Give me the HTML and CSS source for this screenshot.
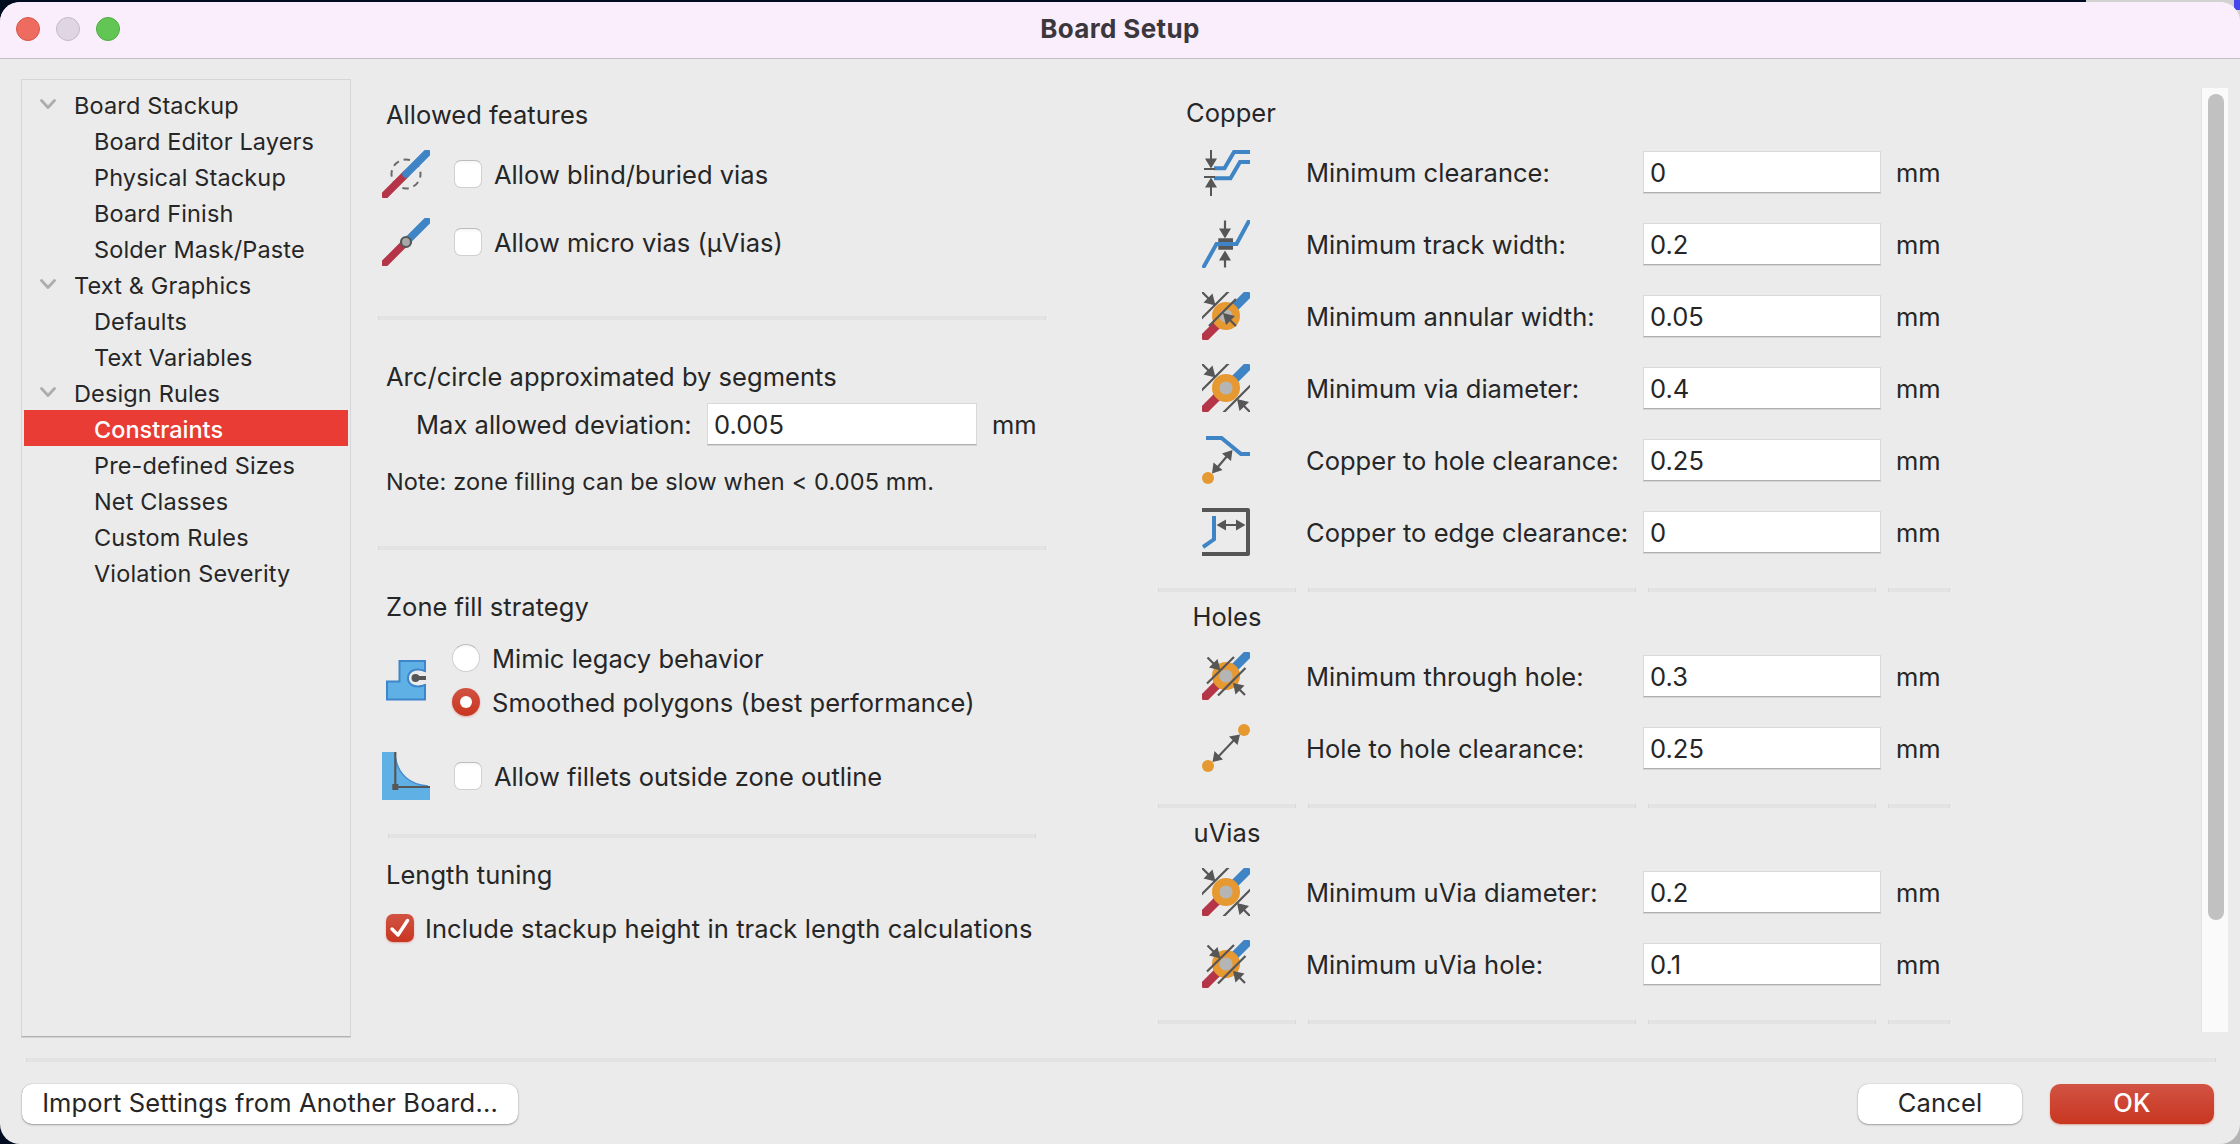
FILE: index.html
```html
<!DOCTYPE html>
<html lang="en">
<head>
<meta charset="utf-8">
<title>Board Setup</title>
<link rel="stylesheet" href="styles.css">
</head>
<body>
<svg class="defs" aria-hidden="true">
  <defs>
    <symbol id="diagonal-track" viewBox="0 0 48 48">
      <path d="M3 45 24 24" stroke="#b33547" stroke-width="7.500" stroke-linecap="round"/>
      <path d="M24 24 45 3" stroke="#3f84c5" stroke-width="7.500" stroke-linecap="round"/>
    </symbol>
    <symbol id="via-track" viewBox="0 0 48 48">
      <path d="M3.500 44.500 24 24" stroke="#b33547" stroke-width="8.800" stroke-linecap="round"/>
      <path d="M24 24 44.500 3.500" stroke="#3f84c5" stroke-width="8.800" stroke-linecap="round"/>
    </symbol>
    <symbol id="via-diameter" viewBox="0 0 48 48">
      <use href="#via-track"/>
      <circle cx="24" cy="24" r="10.3" fill="#b5b5b5" stroke="#e69831" stroke-width="7.4"/>
      <g stroke="#565656" stroke-width="2.2"><path d="M-1 27 27-1M21 49 49 21M0 0 9 9M48 48 39 39"/></g>
      <path d="M13.5 13.5 1.5 10.5 10.5 1.5ZM35 35 37.5 47 47 38Z" fill="#565656"/>
    </symbol>
    <symbol id="via-hole" viewBox="0 0 48 48">
      <use href="#via-track"/>
      <circle cx="24" cy="24" r="10.3" fill="#b5b5b5" stroke="#e69831" stroke-width="7.4"/>
      <g stroke="#565656" stroke-width="2.2"><path d="M5 31.500 32 5M16 43.500 43.500 16M5.500 5.500 13 13M43 43 35 35"/></g>
      <path d="M18.500 18.500 7 15.500 15.500 7ZM31 31 33.500 42.500 42.500 33.500Z" fill="#565656"/>
    </symbol>
  </defs>
</svg>

<div class="desktop">
<div class="window">
  <header class="titlebar">
    <div class="lights"><i class="light close"></i><i class="light minimize"></i><i class="light maximize"></i></div>
    <h1>Board Setup</h1>
  </header>

  <div class="body">
    <nav class="tree">
      <div class="node group"><svg viewBox="0 0 16 10"><path d="M1.500 1.500 8 8.500 14.500 1.500"/></svg>Board Stackup</div>
      <div class="node">Board Editor Layers</div>
      <div class="node">Physical Stackup</div>
      <div class="node">Board Finish</div>
      <div class="node">Solder Mask/Paste</div>
      <div class="node group"><svg viewBox="0 0 16 10"><path d="M1.500 1.500 8 8.500 14.500 1.500"/></svg>Text &amp; Graphics</div>
      <div class="node">Defaults</div>
      <div class="node">Text Variables</div>
      <div class="node group"><svg viewBox="0 0 16 10"><path d="M1.500 1.500 8 8.500 14.500 1.500"/></svg>Design Rules</div>
      <div class="node selected">Constraints</div>
      <div class="node">Pre-defined Sizes</div>
      <div class="node">Net Classes</div>
      <div class="node">Custom Rules</div>
      <div class="node">Violation Severity</div>
    </nav>

    <main class="features">
      <section class="block">
        <h2>Allowed features</h2>
        <label class="option first">
          <svg class="icon" viewBox="0 0 48 48"><circle cx="24" cy="24" r="14.500" stroke="#6a6a6a" stroke-width="2" stroke-dasharray="6.500 4.900" stroke-dashoffset="3"/><use href="#diagonal-track"/></svg>
          <span class="check"></span><span class="text">Allow blind/buried vias</span>
        </label>
        <label class="option second">
          <svg class="icon" viewBox="0 0 48 48"><use href="#diagonal-track"/><circle cx="24" cy="24" r="5" fill="#a8a8a8" stroke="#565656" stroke-width="2.200"/></svg>
          <span class="check"></span><span class="text">Allow micro vias (µVias)</span>
        </label>
      </section>
      <hr>
      <section class="block arcs">
        <h2>Arc/circle approximated by segments</h2>
        <div class="deviation"><span class="name">Max allowed deviation:</span><span class="field">0.005</span><span class="unit">mm</span></div>
        <p class="note">Note: zone filling can be slow when &lt; 0.005 mm.</p>
      </section>
      <hr>
      <section class="block zones">
        <h2>Zone fill strategy</h2>
        <div class="strategy">
          <svg class="icon" viewBox="0 0 48 48">
            <path d="M5 43.500V25.500H17.500V5H43V15C32 11 26 16 26 22S32 33 43 29V43.500Z" fill="#5fb0e5" stroke="#3e86cb" stroke-width="2"/>
            <path d="M44 17C34 12 27.500 17 27.500 22S34 32 44 27Z" fill="#ebebeb"/>
            <circle cx="33.500" cy="22" r="4" fill="#565656"/><path d="M33 22H44" stroke="#565656" stroke-width="4"/>
          </svg>
          <div class="choices">
            <label><span class="radio"></span><span class="text">Mimic legacy behavior</span></label>
            <label><span class="radio on"></span><span class="text">Smoothed polygons (best performance)</span></label>
          </div>
        </div>
        <label class="option fillets">
          <svg class="icon" viewBox="0 0 48 48">
            <path d="M0 0H13.500C14 18 25 33 48 34.500V48H0Z" fill="#5fb0e5"/>
            <path d="M13.500 6C16 21 26 32.500 46 34" stroke="#4a8fd0" stroke-width="1.500"/>
            <path d="M13.300 0V35H48" stroke="#565656" stroke-width="2.200"/><path d="M10.300 32H16.300V38H10.300Z" fill="#565656"/>
          </svg>
          <span class="check"></span><span class="text">Allow fillets outside zone outline</span>
        </label>
      </section>
      <hr class="inset">
      <section class="block tuning">
        <h2>Length tuning</h2>
        <label class="stackup"><span class="check on"><svg viewBox="0 0 28 28"><path d="M6 15 12 21 21.500 6.500"/></svg></span><span class="text">Include stackup height in track length calculations</span></label>
      </section>
    </main>

    <section class="limits">
      <h2 class="copper">Copper</h2>
      <div class="limit">
        <svg class="icon" viewBox="0 0 48 48"><path d="M12 20.300H22.500L32 4H48M12 30.300H28.500L38 14H48" stroke="#3f84c5" stroke-width="4"/><path d="M9 2V12M9 48V37M2 21H13M2 29H13" stroke="#565656" stroke-width="2"/><path d="M3 10.500H15L9 20.500ZM3 39.500H15L9 29.500Z" fill="#565656"/></svg>
        <span class="name">Minimum clearance:</span><span class="field">0</span><span class="unit">mm</span></div>
      <div class="limit">
        <svg class="icon" viewBox="0 0 48 48"><path d="M23 .500V10M23 47.500V39" stroke="#565656" stroke-width="2.200"/><path d="M17 8.500H29L23 18.500ZM17 40.500H29L23 30.500Z" fill="#565656"/><path d="M16.300 18.300H31V29.700H16.300Z" fill="#565656"/><path d="M1 48 14.500 24H34.500L47.500 0" stroke="#3f84c5" stroke-width="4"/></svg>
        <span class="name">Minimum track width:</span><span class="field">0.2</span><span class="unit">mm</span></div>
      <div class="limit">
        <svg class="icon" viewBox="0 0 48 48"><use href="#via-track"/><circle cx="24" cy="24" r="10.300" fill="#b5b5b5" stroke="#e69831" stroke-width="7.400"/><path d="M-1 27 27-1M7 34 34 7M0 0 9 9M34 34 28 28" stroke="#565656" stroke-width="2.200"/><path d="M13.500 13.500 1.500 10.500 10.500 1.500ZM21 21 24 33 33 24Z" fill="#565656"/></svg>
        <span class="name">Minimum annular width:</span><span class="field">0.05</span><span class="unit">mm</span></div>
      <div class="limit">
        <svg class="icon" viewBox="0 0 48 48"><use href="#via-diameter"/></svg>
        <span class="name">Minimum via diameter:</span><span class="field">0.4</span><span class="unit">mm</span></div>
      <div class="limit">
        <svg class="icon" viewBox="0 0 48 48"><path d="M4 2H19.500L39 18H48" stroke="#3f84c5" stroke-width="4"/><circle cx="6" cy="42" r="6" fill="#e69831"/><path d="M15 32 26 19" stroke="#565656" stroke-width="2.200"/><path d="M10 37.500 11.500 26.500 20.500 34ZM30.500 14 20 17.500 29 25Z" fill="#565656"/></svg>
        <span class="name">Copper to hole clearance:</span><span class="field">0.25</span><span class="unit">mm</span></div>
      <div class="limit">
        <svg class="icon" viewBox="0 0 48 48"><path d="M0 2H46V46H0" stroke="#565656" stroke-width="4" stroke-linejoin="round"/><path d="M12 8V31.300L1 39" stroke="#3f84c5" stroke-width="4"/><path d="M22 17H37" stroke="#565656" stroke-width="2"/><path d="M14.500 17 24 11.500V22.500ZM43.500 17 34 11.500V22.500Z" fill="#565656"/></svg>
        <span class="name">Copper to edge clearance:</span><span class="field">0</span><span class="unit">mm</span></div>
      <div class="rules"><hr><hr><hr><hr></div>

      <h2>Holes</h2>
      <div class="limit">
        <svg class="icon" viewBox="0 0 48 48"><use href="#via-hole"/></svg>
        <span class="name">Minimum through hole:</span><span class="field">0.3</span><span class="unit">mm</span></div>
      <div class="limit">
        <svg class="icon" viewBox="0 0 48 48"><circle cx="42" cy="6" r="6" fill="#e69831"/><circle cx="6" cy="42" r="6" fill="#e69831"/><path d="M16 33 32 16" stroke="#565656" stroke-width="2"/><path d="M10.500 38 12.500 27 21 35.500ZM38 10.500 27 12.500 35.500 21Z" fill="#565656"/></svg>
        <span class="name">Hole to hole clearance:</span><span class="field">0.25</span><span class="unit">mm</span></div>
      <div class="rules"><hr><hr><hr><hr></div>

      <h2>uVias</h2>
      <div class="limit">
        <svg class="icon" viewBox="0 0 48 48"><use href="#via-diameter"/></svg>
        <span class="name">Minimum uVia diameter:</span><span class="field">0.2</span><span class="unit">mm</span></div>
      <div class="limit">
        <svg class="icon" viewBox="0 0 48 48"><use href="#via-hole"/></svg>
        <span class="name">Minimum uVia hole:</span><span class="field">0.1</span><span class="unit">mm</span></div>
      <div class="rules"><hr><hr><hr><hr></div>
    </section>

    <div class="scrollbar"><div class="thumb"></div></div>
  </div>

  <footer class="footer">
    <hr>
    <div class="actions">
      <button class="import">Import Settings from Another Board...</button>
      <button class="cancel">Cancel</button>
      <button class="ok">OK</button>
    </div>
  </footer>
</div>
</div>
</body>
</html>
```
FILE: styles.css
```css
* { box-sizing: border-box; }

body {
  margin: 0;
  color: #262626;
  font: 25.5px/32px Inter, "Liberation Sans", sans-serif;
  letter-spacing: 0.03px;
}

h1, h2, p { margin: 0; font: inherit; }
svg { display: block; fill: none; flex: none; }
.defs { position: absolute; width: 0; height: 0; }

/* Backdrop visible around the rounded window corners */
.desktop {
  height: 1144px;
  padding-top: 2px;
  overflow: hidden;
  background:
    linear-gradient(#4646ea, #4646ea) 2234px 0 / 6px 10px no-repeat,
    linear-gradient(90deg, #000c1f 2086px, #d2d2d0 2086px) 0 0 / 100% 40px no-repeat,
    linear-gradient(90deg, #000c1f 1120px, #b4b4b4 1120px);
}

.window {
  display: flex;
  flex-direction: column;
  height: 1142px;
  overflow: hidden;
  border-radius: 20px;
  background: #ebebeb;
}

.titlebar {
  display: grid;
  grid-template-columns: 1fr auto 1fr;
  align-items: center;
  height: 57px;
  padding: 0 16px 2px;
  border-bottom: 1px solid #c5bec7;
  background: #faeefc;
}
.titlebar h1 { font-size: 26px; font-weight: 700; letter-spacing: 0.35px; color: #3b373c; }
.lights { display: flex; gap: 16px; }
.light { width: 24px; height: 24px; border: 1px solid; border-radius: 50%; }
.close { background: #ed6b5f; border-color: #d75548; }
.minimize { background: #e0d5e2; border-color: #c4bac6; }
.maximize { background: #61c654; border-color: #4fab41; }

.body { display: flex; height: 984px; padding-left: 21px; }

.tree {
  width: 330px;
  height: 958px;
  margin: 20px 27px 0 0;
  padding: 6px 2px;
  border: 1px solid #d6d6d6;
  border-bottom-color: #b2b2b2;
  box-shadow: 0 1px 0 #d2d2d2;
  font-size: 23.5px;
  letter-spacing: 0.14px;
}
.node { display: flex; align-items: center; height: 36px; padding: 4px 0 0 70px; white-space: nowrap; }
.node.group { padding-left: 16px; }
.node svg { width: 16px; height: 10px; margin: -4px 18px 0 0; stroke: #adadad; stroke-width: 2.8; stroke-linecap: round; stroke-linejoin: round; }
.node.selected { background: #e83c35; color: #fff; font-weight: 500; letter-spacing: 0; }

hr {
  height: 4px;
  margin: 0;
  border: solid #d9d9d9;
  border-width: 0 1px;
  background: #e3e3e3;
}

.features { width: 668px; padding-top: 40px; white-space: nowrap; }
.block { padding-left: 4px; }
.block h2 { padding-left: 4px; }
.icon { width: 48px; height: 48px; overflow: hidden; }
.option { display: flex; align-items: center; height: 48px; }
.option.first { margin-top: 19px; }
.option.second { margin-top: 20px; }
.option .check { margin: 0 12px 0 24px; }
.text { padding-top: 1px; }

.check, .radio {
  width: 28px;
  height: 28px;
  flex: none;
  border-radius: 7px;
  border: 1px solid #d0d0d0;
  border-top-color: #bcbcbc;
  background: linear-gradient(#f6f6f6, #fff 4px);
}
.radio { border-radius: 50%; }
.check.on, .radio.on {
  border: 0;
  background: linear-gradient(#d15343, #c93620);
  box-shadow: 0 1px 2px rgba(200, 50, 30, 0.35);
}
.check.on svg { width: 28px; height: 28px; stroke: #fff; stroke-width: 3.4; stroke-linecap: round; stroke-linejoin: round; }
.radio.on { display: grid; place-items: center; }
.radio.on::after { content: ""; width: 12px; height: 12px; border-radius: 50%; background: #fff; }

.features > hr { margin-top: 50px; }
.arcs { padding-top: 41px; }
.deviation { display: flex; align-items: center; height: 42px; margin-top: 10px; padding-left: 34px; }
.deviation .name { padding-top: 2px; }
.deviation .field { width: 270px; margin-left: auto; }
.deviation .unit { width: 69px; padding-left: 15px; }
.note { margin: 21px 0 -2px; padding-left: 4px; font-size: 23.5px; letter-spacing: 0.14px; }
.zones { padding-top: 41px; }
.strategy { display: flex; align-items: center; height: 72px; margin-top: 21px; }
.choices { display: grid; gap: 16px; margin-left: 22px; }
.choices label { display: flex; align-items: center; gap: 12px; height: 28px; }
.fillets { margin-top: 36px; }
.features > hr.inset { margin: 34px 10px 0; }
.tuning { padding-top: 21px; }
.stackup { display: flex; align-items: center; gap: 11px; height: 28px; margin-top: 23px; padding-left: 4px; }
.stackup .text { padding-top: 2px; letter-spacing: 0.09px; }

.field {
  height: 42px;
  padding: 0 6px;
  border: 1px solid #d9d9d9;
  border-bottom-color: #afafaf;
  box-shadow: 0 1px 0 #d4d4d4;
  background: #fff;
  line-height: 41px;
}

.limits { width: 792px; margin-left: 112px; padding-top: 38px; white-space: nowrap; }
.limits h2 { width: 138px; margin-bottom: 7px; text-align: center; }
.limits h2.copper { padding-left: 8px; }
.limit, .rules { display: grid; grid-template-columns: 138px 328px 228px 62px; column-gap: 12px; }
.limit { align-items: center; height: 72px; }
.limit .icon { margin-left: 44px; }
.limit .name { margin-left: -2px; padding-top: 1px; }
.limit .field { margin: 0 -5px; }
.unit { padding: 1px 0 0 8px; }
.rules { margin: 20px 0 9px; }

.scrollbar { width: 27px; height: 944px; margin: 29px 12px 0 auto; padding: 6px 4px 0 6px; border-left: 1px solid #e4e4e4; background: #fafafa; }
.thumb { width: 16px; height: 826px; border-radius: 8px; background: #c1c1c1; }

.footer { padding: 15px 24px 0 26px; }
.actions { display: flex; margin: 22px 2px 0 -4px; }
button {
  height: 40px;
  padding: 0 0 2px;
  border: 0;
  border-radius: 10px;
  background: #fff;
  box-shadow: 0 0 1px rgba(0, 0, 0, 0.35), 0 1px 2px rgba(0, 0, 0, 0.3);
  color: inherit;
  font: inherit;
  letter-spacing: 0.15px;
}
.import { width: 496px; }
.cancel { width: 164px; margin-left: auto; }
.ok { width: 164px; margin-left: 28px; background: linear-gradient(#d15343, #c93620); color: #fff; font-weight: 500; box-shadow: 0 1px 2px rgba(200, 50, 30, 0.4); }
```
